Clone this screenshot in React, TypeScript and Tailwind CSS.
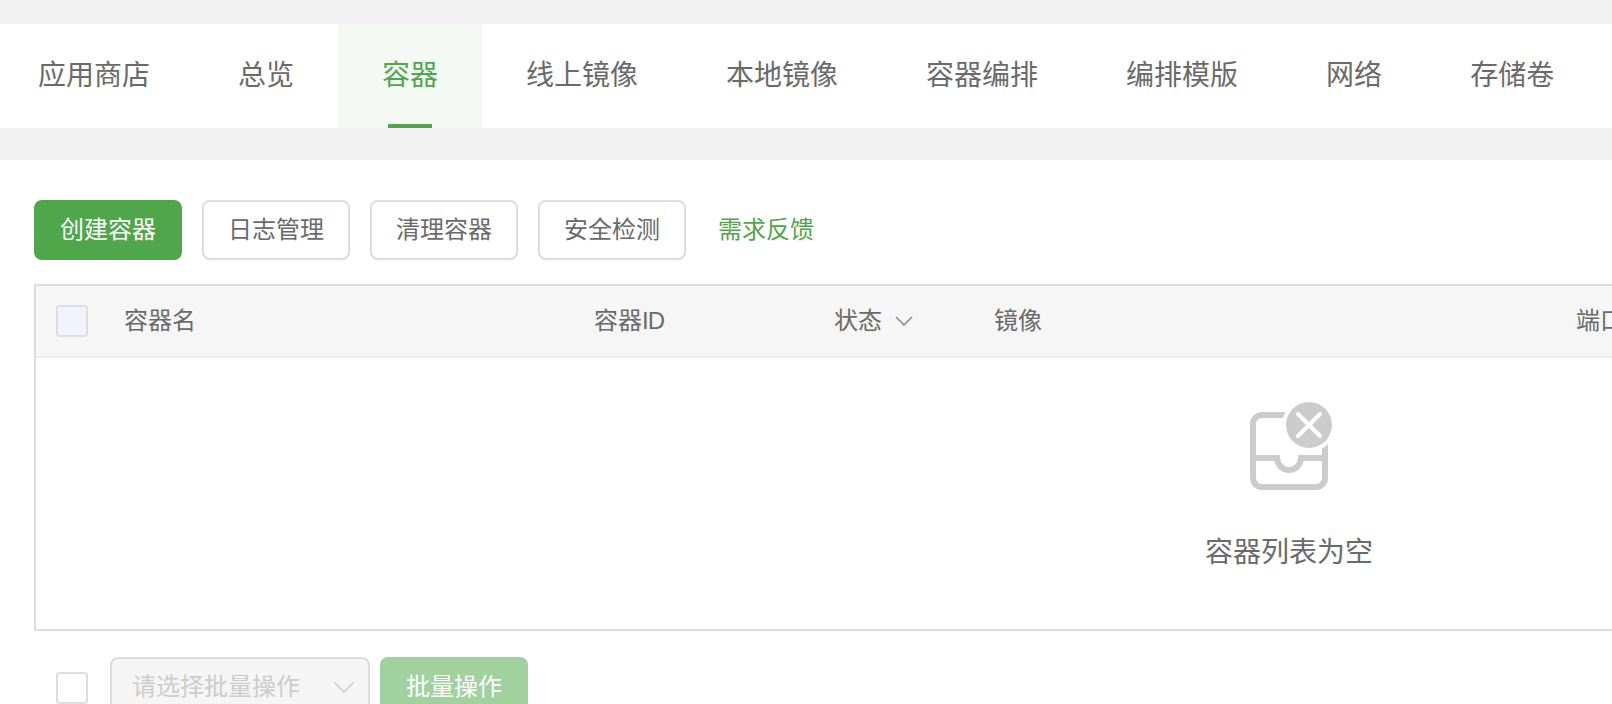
export default function App() {
  const tabs = ["应用商店", "总览", "容器", "线上镜像", "本地镜像", "容器编排", "编排模版", "网络", "存储卷"];
  const font = "font-['Liberation_Sans','Noto_Sans_CJK_SC',sans-serif]";
  return (
    <div className={`w-[1612px] h-[704px] overflow-hidden bg-white text-[#6a6a6a] ${font}`}>
      <div className="bg-[#f2f2f2] pt-[24px] pb-[32px]">
        <nav className="flex h-[104px] bg-white pl-[38px]">
          {tabs.map((t, i) => (
            <div
              key={t}
              className={
                i === 0
                  ? "h-full pr-[44px] flex items-center text-[28px] leading-[40px] whitespace-nowrap"
                  : i === 2
                    ? "relative h-full px-[44px] flex items-center text-[28px] leading-[40px] whitespace-nowrap text-[#4fa64b] bg-[#f4f9f4]"
                    : "h-full px-[44px] flex items-center text-[28px] leading-[40px] whitespace-nowrap"
              }
            >
              {t}
              {i === 2 && <span className="absolute bottom-0 left-[50px] w-[44px] h-[4px] bg-[#4fa64b]" />}
            </div>
          ))}
        </nav>
      </div>

      <div className="pl-[34px] pt-[40px]">
        <div className="flex items-center h-[60px]">
          <button className="w-[148px] h-[60px] rounded-[8px] bg-[#4fa64b] text-white text-[24px] leading-[32px]">创建容器</button>
          {["日志管理", "清理容器", "安全检测"].map((t) => (
            <button key={t} className="ml-[20px] w-[148px] h-[60px] rounded-[8px] border-2 border-[#dddddd] bg-white text-[#6a6a6a] text-[24px] leading-[32px]">
              {t}
            </button>
          ))}
          <a className="ml-[32px] text-[#4fa64b] text-[24px] leading-[32px]">需求反馈</a>
        </div>

        <div className="mt-[24px] w-[2510px] border-2 border-[#dddddd]">
          <div className="flex items-center h-[70px] bg-[#f6f6f6] border-b-2 border-[#eeeeee] -mb-px box-content text-[24px] leading-[32px]">
            <div className="pl-[20px] w-[88px] shrink-0">
              <div className="w-[32px] h-[32px] rounded-[4px] border-2 border-[#dddddd] bg-[#f0f4fb]" />
            </div>
            <div className="w-[470px] shrink-0">容器名</div>
            <div className="w-[240px] shrink-0">
              容器<span className="tracking-[-1px]">ID</span>
            </div>
            <div className="w-[160px] shrink-0 flex items-center">
              状态
              <svg className="ml-[13px]" width="18" height="10" viewBox="0 0 18 10" fill="none" stroke="#888888" strokeWidth="1.5">
                <polyline points="1,1 9,9 17,1" />
              </svg>
            </div>
            <div className="w-[582px] shrink-0">镜像</div>
            <div className="shrink-0">端口</div>
          </div>
          <div className="h-[272px] flex flex-col items-center pt-[54px]">
            <svg className="overflow-visible" width="80" height="80" viewBox="0 0 80 80" fill="none">
              <rect x="4" y="4" width="72" height="72" rx="9" stroke="#cccccc" strokeWidth="6" />
              <path d="M4 47H28C29 63 51 63 52 47H76" stroke="#cccccc" strokeWidth="6" />
              <circle cx="60" cy="14" r="27" fill="#ffffff" />
              <circle cx="60" cy="14" r="23" fill="#cccccc" />
              <path d="M49 3L71 25M71 3L49 25" stroke="#ffffff" strokeWidth="4" strokeLinecap="round" />
            </svg>
            <div className="mt-[42px] text-[28px] leading-[40px]">容器列表为空</div>
          </div>
        </div>

        <div className="flex items-start mt-[26px] pl-[22px]">
          <div className="mt-[15px] w-[32px] h-[32px] rounded-[4px] border-2 border-[#dddddd] bg-white shrink-0" />
          <div className="ml-[22px] w-[260px] h-[60px] shrink-0 flex items-center justify-between pl-[20px] pr-[13px] rounded-[8px] border-2 border-[#dddddd] bg-[#f5f5f5] text-[#cccccc] text-[24px] leading-[32px]">
            <span>请选择批量操作</span>
            <svg width="22" height="12" viewBox="0 0 22 12" fill="none" stroke="#cccccc" strokeWidth="1.5">
              <polyline points="1,1 11,11 21,1" />
            </svg>
          </div>
          <button className="ml-[10px] w-[148px] h-[60px] shrink-0 rounded-[8px] bg-[#a0d19e] text-white text-[24px] leading-[32px]">批量操作</button>
        </div>
      </div>
    </div>
  );
}
